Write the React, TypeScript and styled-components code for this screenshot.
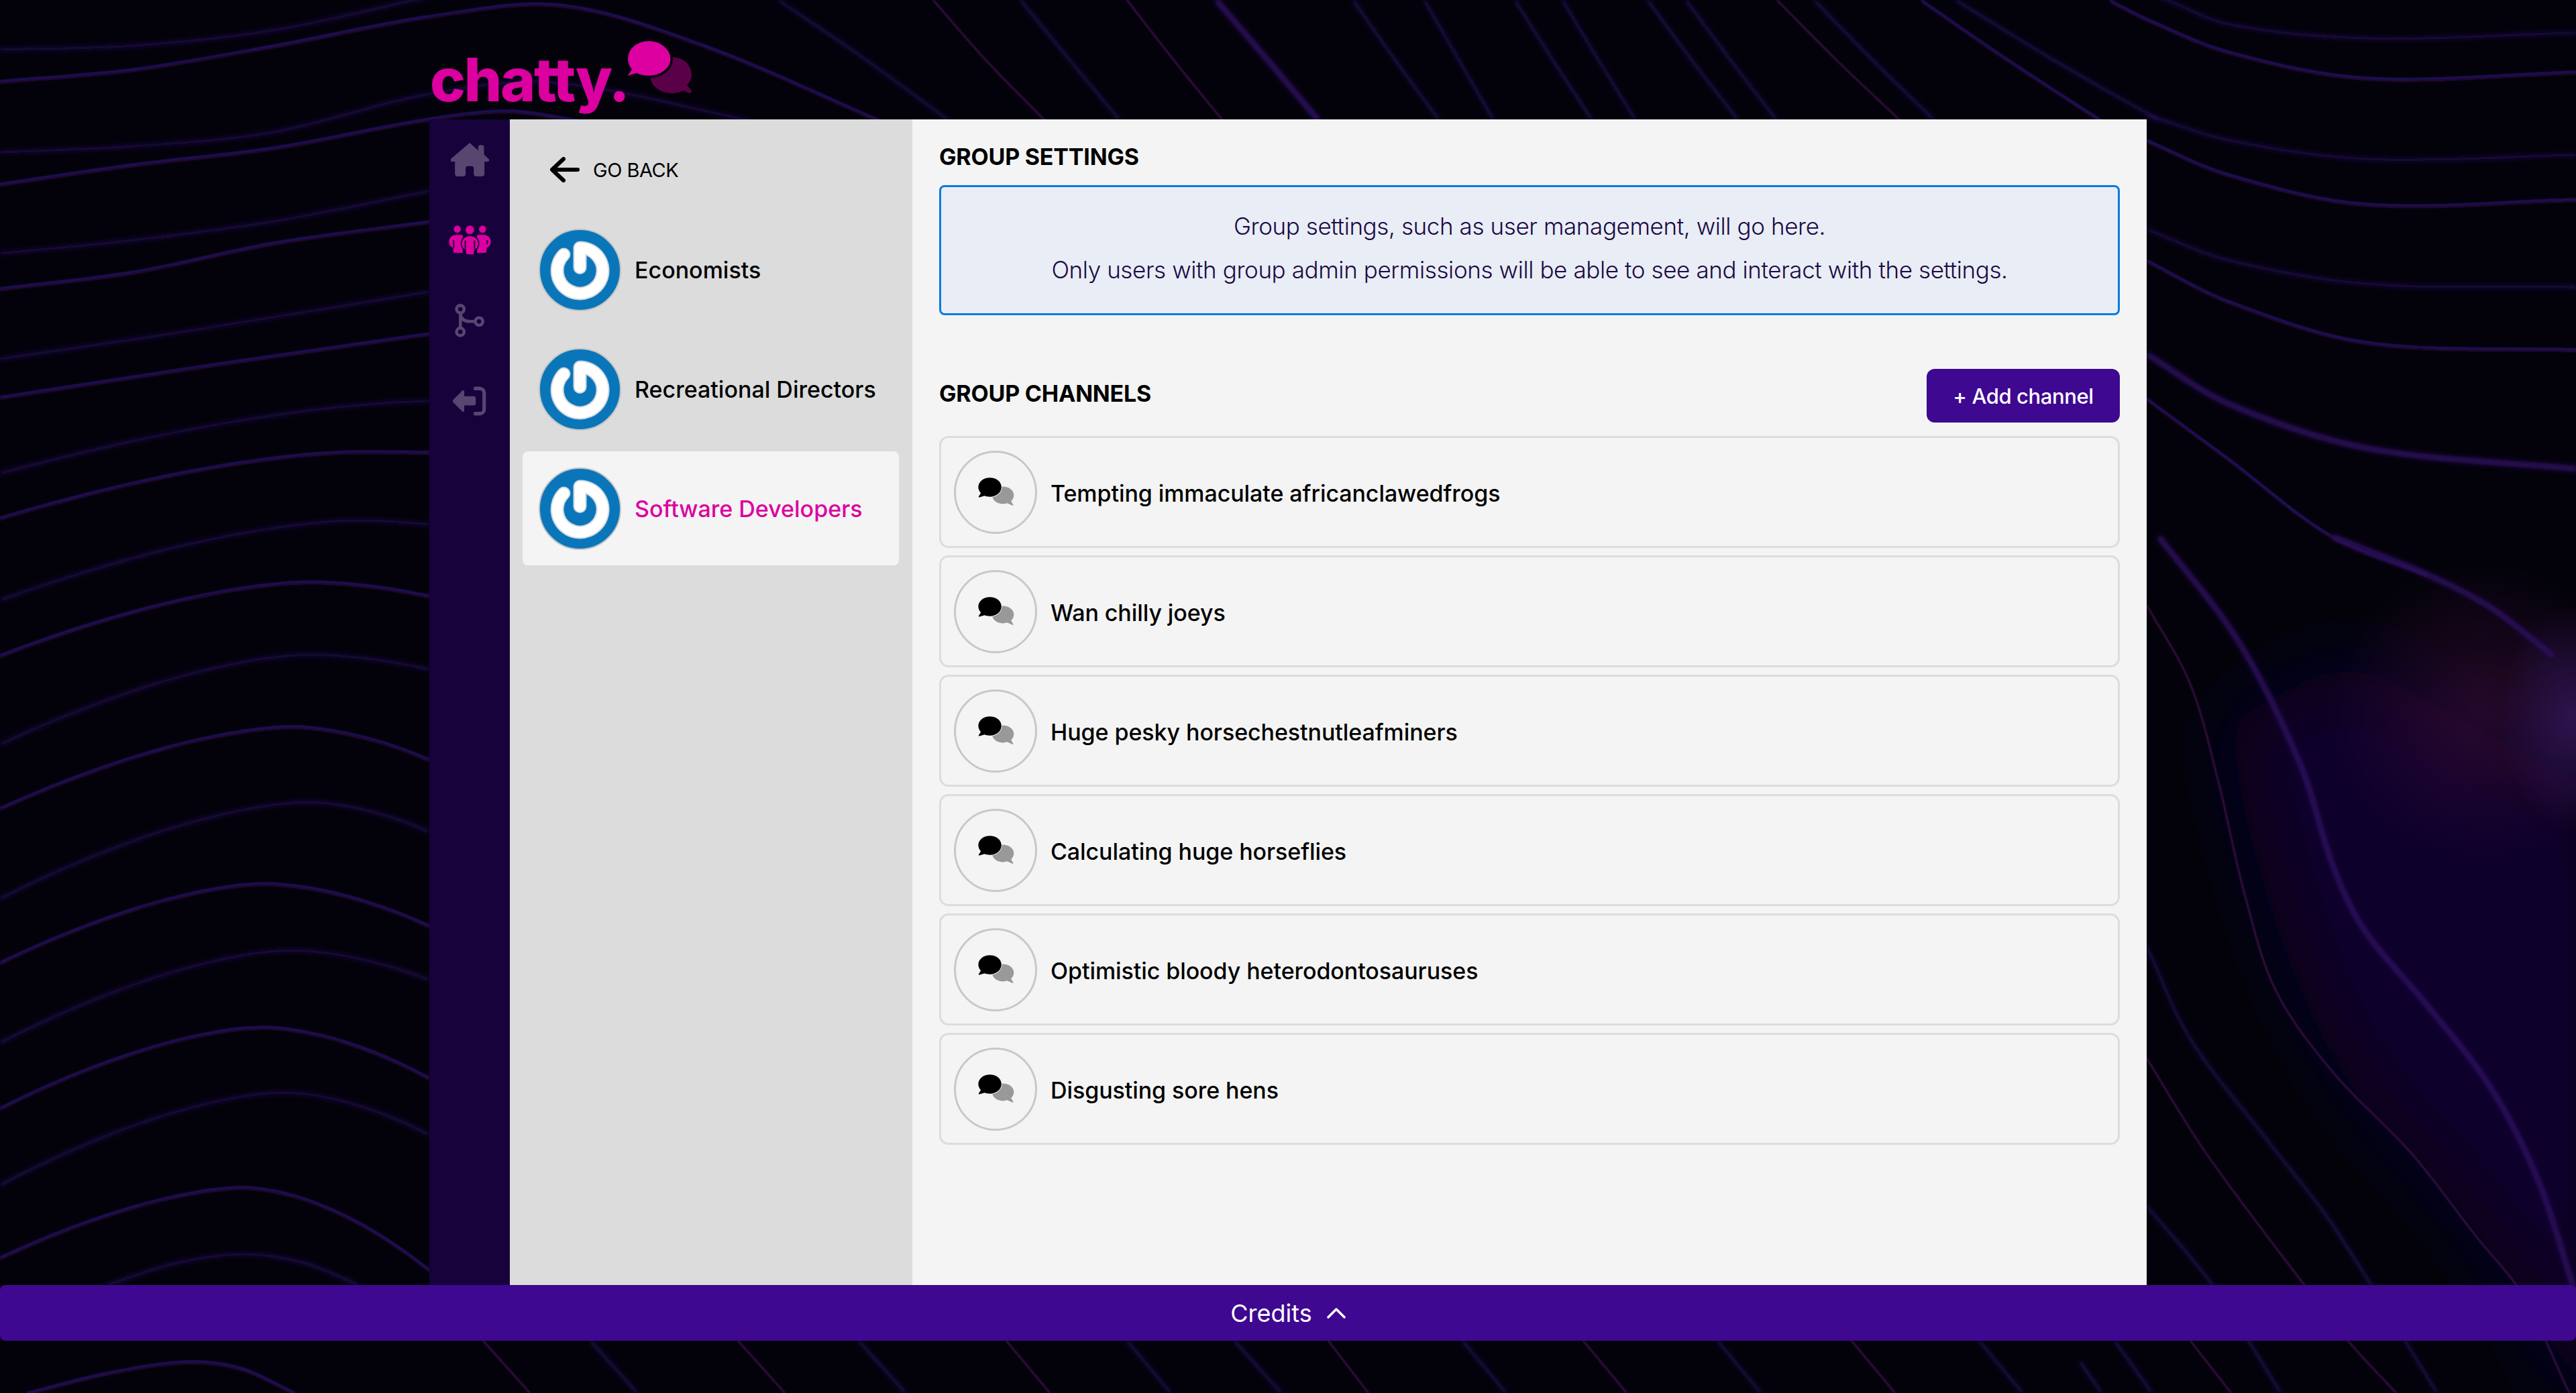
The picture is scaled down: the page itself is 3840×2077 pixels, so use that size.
import React from 'react';
import styled, { createGlobalStyle } from 'styled-components';

const GlobalStyle = createGlobalStyle`
  html, body { margin: 0; padding: 0; height: 100%; background: #03020a; }
  body { font-family: Inter, "Noto Sans", "Liberation Sans", sans-serif; color: #000; }
  #root { height: 100%; }
`;

const Page = styled.div`
  position: relative;
  height: 2077px;
  overflow: hidden;
  display: flex;
  flex-direction: column;
`;

const Backdrop = styled.svg`
  position: absolute;
  inset: 0;
  width: 3840px;
  height: 2077px;
`;

const Header = styled.header`
  position: relative;
  width: 2560px;
  height: 178px;
  margin: 0 auto;
  box-sizing: border-box;
  padding: 63px 0 0 1px;
  display: flex;
  align-items: flex-start;
`;

const LogoText = styled.span`
  font-size: 89px;
  line-height: 112px;
  font-weight: 800;
  letter-spacing: -2.3px;
  color: #dc00a0;
`;

const LogoMark = styled.svg`
  width: 100px;
  height: 80px;
  margin: -3px 0 0 -4px;
`;

const Shell = styled.div`
  position: relative;
  width: 2560px;
  height: 1738px;
  margin: 0 auto;
  display: flex;
`;

const Rail = styled.nav`
  width: 120px;
  flex: none;
  background: #17023b;
  display: flex;
  flex-direction: column;
`;

const RailItem = styled.div`
  height: 120px;
  display: flex;
  align-items: center;
  justify-content: center;
`;

const Side = styled.aside`
  width: 600px;
  flex: none;
  box-sizing: border-box;
  background: #dcdcdc;
  padding: 0 20px 0 19px;
  display: flex;
  flex-direction: column;
  gap: 8px;
`;

const BackLink = styled.div`
  height: 131px;
  box-sizing: border-box;
  padding: 19px 0 0 41px;
  display: flex;
  align-items: center;
  gap: 20px;
  font-size: 29px;
  font-weight: 400;
  letter-spacing: -0.5px;
`;

const GroupRow = styled.div<{ $active?: boolean }>`
  height: 170px;
  box-sizing: border-box;
  padding: 0 24px;
  border-radius: 8px;
  display: flex;
  align-items: center;
  gap: 20px;
  font-size: 34px;
  font-weight: 500;
  letter-spacing: 0;
  background: ${(p) => (p.$active ? '#f4f4f4' : 'transparent')};
  color: ${(p) => (p.$active ? '#dc00a0' : '#000')};
`;

const Main = styled.main`
  flex: 1;
  box-sizing: border-box;
  background: #f4f4f4;
  padding: 36px 40px 0;
`;

const Heading = styled.h2`
  margin: 0;
  font-size: 34px;
  line-height: 40px;
  font-weight: 700;
  letter-spacing: -0.2px;
`;

const ChannelsHeading = styled(Heading)`
  margin-bottom: 7px;
`;

const InfoBox = styled.div`
  margin-top: 22px;
  height: 194px;
  box-sizing: border-box;
  border: 3px solid #0a7be0;
  border-radius: 8px;
  background: #e9edf5;
  color: #1b0a45;
  font-size: 35px;
  font-weight: 300;
  letter-spacing: -0.4px;
  line-height: 65px;
  text-align: center;
  padding-top: 26px;
`;

const ChannelsBar = styled.div`
  margin-top: 80px;
  display: flex;
  align-items: center;
  justify-content: space-between;
`;

const AddButton = styled.button`
  width: 288px;
  height: 80px;
  border: 0;
  border-radius: 12px;
  background: #3f0891;
  color: #fff;
  font: 500 31px Inter, "Noto Sans", sans-serif;
  letter-spacing: -0.4px;
`;

const ChannelList = styled.div`
  margin-top: 20px;
  display: flex;
  flex-direction: column;
  gap: 11px;
`;

const ChannelRow = styled.div`
  height: 167px;
  box-sizing: border-box;
  border: 3px solid #dcdcdc;
  border-radius: 14px;
  padding: 0 19px;
  display: flex;
  align-items: center;
  gap: 20px;
  font-size: 34px;
  font-weight: 500;
  letter-spacing: -0.08px;
`;

const ChannelName = styled.span`
  padding-top: 3px;
`;

const ChannelBadge = styled.div`
  width: 124px;
  height: 124px;
  flex: none;
  box-sizing: border-box;
  border: 3px solid #c8c8c8;
  border-radius: 50%;
  display: flex;
  align-items: center;
  justify-content: center;
`;

const CreditsBar = styled.footer`
  position: relative;
  height: 83px;
  flex: none;
  border-radius: 8px;
  background: #3f0891;
  color: #fff;
  display: flex;
  align-items: center;
  justify-content: center;
  gap: 22px;
  font-size: 36px;
  font-weight: 400;
  letter-spacing: 0;
`;

type Tone = 'strong' | 'soft' | 'wine' | 'wide';
type Wave = [Tone, number[]];

// spline whose handles scale with each segment, so uneven points don't kink
const smooth = (n: number[]) => {
  const p: [number, number][] = [];
  for (let i = 0; i < n.length; i += 2) p.push([n[i], n[i + 1]]);
  const tangent = (i: number): [number, number] => {
    const a = p[Math.max(i - 1, 0)];
    const c = p[Math.min(i + 1, p.length - 1)];
    const len = Math.hypot(c[0] - a[0], c[1] - a[1]) || 1;
    return [(c[0] - a[0]) / len, (c[1] - a[1]) / len];
  };
  let d = `M${p[0][0]} ${p[0][1]}`;
  for (let i = 0; i < p.length - 1; i++) {
    const b = p[i];
    const c = p[i + 1];
    const h = Math.hypot(c[0] - b[0], c[1] - b[1]) / 3;
    const t0 = tangent(i);
    const t1 = tangent(i + 1);
    d += ` C${b[0] + t0[0] * h} ${b[1] + t0[1] * h} ${c[0] - t1[0] * h} ${c[1] - t1[1] * h} ${c[0]} ${c[1]}`;
  }
  return d;
};

// broad crest on the left side of the page: start height, crest, end height
const crest = (y0: number, xc: number, yc: number, y1: number): number[] => {
  const out: number[] = [];
  for (let x = 0; x <= 640; x += 40) {
    const y =
      x < xc
        ? yc + (y0 - yc) * Math.pow((xc - x) / xc, 1.6)
        : yc + (y1 - yc) * Math.pow((x - xc) / (640 - xc || 1), 1.8);
    out.push(x, Math.round(y * 10) / 10);
  }
  return out;
};

const waves: Wave[] = [
  // left edge
  ['soft', [0, 74, 200, 68, 408, 45, 640, -5]],
  ['strong', [0, 121, 200, 103, 408, 68, 640, 24, 834, 7, 1048, 67, 1313, 180]],
  ['soft', [0, 227, 200, 218, 408, 197, 640, 140, 823, 123, 1120, 180]],
  ['strong', [0, 274, 200, 245, 408, 220, 640, 177, 760, 165, 865, 180]],
  ['soft', [0, 378, 200, 358, 408, 330, 640, 285]],
  ['strong', [0, 430, 200, 405, 408, 362, 640, 330]],
  ['soft', [0, 535, 245, 499, 640, 435]],
  ['strong', [0, 592, 320, 543, 640, 497]],
  ['soft', crest(706, 640, 598, 598)],
  ['strong', crest(772, 530, 673, 674)],
  ['soft', crest(895, 530, 776, 782)],
  ['strong', crest(977, 460, 867, 888)],
  ['soft', crest(1110, 460, 976, 998)],
  ['strong', crest(1205, 432, 1083, 1132)],
  ['soft', crest(1340, 457, 1196, 1240)],
  ['strong', crest(1435, 392, 1317, 1380)],
  ['soft', crest(1555, 432, 1417, 1461)],
  ['strong', crest(1652, 388, 1531, 1607)],
  ['soft', crest(1767, 420, 1629, 1692)],
  ['strong', crest(1875, 360, 1770, 1893)],
  ['soft', [160, 1916, 260, 1884, 360, 1870, 450, 1882, 535, 1916]],
  ['strong', [40, 2077, 160, 2047, 280, 2030, 360, 2040, 440, 2077]],
  // top strip
  ['soft', [1160, 0, 1285, 85, 1415, 180]],
  ['wine', [1391, 0, 1470, 90, 1558, 180]],
  ['soft', [1521, 0, 1595, 90, 1670, 180]],
  ['wine', [1680, 0, 1750, 90, 1823, 180]],
  ['wide', [1813, 0, 1890, 90, 1966, 180]],
  ['soft', [2017, 0, 2080, 90, 2146, 180]],
  ['soft', [2123, 0, 2175, 90, 2227, 180]],
  ['soft', [2258, 0, 2315, 90, 2374, 180]],
  ['soft', [2329, 0, 2383, 90, 2439, 180]],
  ['soft', [2456, 0, 2522, 90, 2592, 180]],
  ['soft', [2513, 0, 2580, 90, 2649, 180]],
  ['wine', [2649, 0, 2738, 90, 2833, 180]],
  ['soft', [2704, 0, 2792, 90, 2884, 180]],
  ['strong', [2864, 0, 2995, 90, 3133, 180]],
  ['soft', [2915, 0, 3062, 90, 3220, 180]],
  // right edge
  ['soft', [3145, -30, 3230, 0, 3322, 36, 3527, 57, 3840, 49]],
  ['strong', [3145, 0, 3200, 28, 3322, 77, 3527, 116, 3840, 107]],
  ['soft', [3200, 171, 3322, 209, 3527, 237, 3840, 231]],
  ['strong', [3200, 209, 3322, 260, 3527, 304, 3840, 297]],
  ['soft', [3200, 342, 3322, 388, 3527, 423, 3840, 428]],
  ['strong', [3200, 388, 3322, 449, 3527, 510, 3840, 521]],
  ['wide', [3200, 528, 3322, 602, 3527, 668, 3840, 699]],
  ['strong', [3200, 594, 3322, 684, 3477, 800, 3619, 857]],
  ['wide', [3477, 800, 3619, 857, 3713, 906, 3807, 979]],
  ['wide', [3218, 800, 3336, 955, 3430, 1142, 3477, 1289, 3524, 1386, 3619, 1500, 3713, 1622, 3784, 1761, 3840, 1932]],
  ['wine', [3200, 902, 3265, 1020, 3307, 1166, 3345, 1329, 3392, 1476, 3477, 1598, 3595, 1720, 3690, 1842, 3760, 1930, 3830, 2077]],
  ['soft', [3200, 1411, 3265, 1549, 3383, 1704, 3477, 1826, 3633, 2077]],
  ['wine', [3200, 1578, 3289, 1720, 3435, 1916, 3500, 1999, 3572, 2077]],
  ['soft', [3200, 1798, 3298, 1916, 3400, 2077]],
  // bottom strip
  ['wine', [3265, 1999, 3326, 2077]],
  ['soft', [3152, 1999, 3208, 2077]],
  ['soft', [3100, 2030, 3133, 2077]],
  ['wine', [1980, 1999, 2040, 2077]],
  ['soft', [1840, 1999, 1910, 2077]],
  ['wine', [720, 1999, 790, 2077]],
  ['soft', [880, 1999, 950, 2077]],
  ['wine', [1100, 1999, 1170, 2077]],
  ['soft', [1280, 1999, 1350, 2077]],
  ['wine', [1500, 1999, 1565, 2077]],
  ['soft', [1680, 1999, 1745, 2077]],
  ['soft', [2180, 1999, 2245, 2077]],
  ['wine', [2360, 1999, 2425, 2077]],
  ['soft', [2560, 1999, 2625, 2077]],
  ['wine', [2760, 1999, 2825, 2077]],
  ['soft', [2950, 1999, 3015, 2077]],
];

const strokeOf: Record<Tone, { color: string; width: number; filter: string }> = {
  strong: { color: '#261266', width: 3, filter: 'url(#thin)' },
  soft: { color: '#1e0e48', width: 5, filter: 'url(#soft)' },
  wine: { color: '#34103f', width: 3, filter: 'url(#thin)' },
  wide: { color: '#291158', width: 9, filter: 'url(#soft)' },
};

const WaveField = () => (
  <Backdrop viewBox="0 0 3840 2077" aria-hidden>
    <defs>
      <filter id="thin" filterUnits="userSpaceOnUse" x="0" y="0" width="3840" height="2077">
        <feGaussianBlur stdDeviation="1" />
      </filter>
      <filter id="soft" filterUnits="userSpaceOnUse" x="0" y="0" width="3840" height="2077">
        <feGaussianBlur stdDeviation="3" />
      </filter>
      <filter id="haze" filterUnits="userSpaceOnUse" x="2800" y="400" width="1300" height="1900">
        <feGaussianBlur stdDeviation="60" />
      </filter>
      <radialGradient id="glowWine">
        <stop offset="0" stopColor="#3b0d3a" stopOpacity="0.6" />
        <stop offset="1" stopColor="#3b0d3a" stopOpacity="0" />
      </radialGradient>
      <radialGradient id="glowViolet">
        <stop offset="0" stopColor="#3a1a66" stopOpacity="0.7" />
        <stop offset="1" stopColor="#3a1a66" stopOpacity="0" />
      </radialGradient>
    </defs>
    <rect width="3840" height="2077" fill="#03020a" />
    <path
      d="M3320 1080 C3360 1300 3420 1500 3520 1640 C3650 1780 3760 1900 3830 2077 H3900 V1200 L3500 980 Z"
      fill="#0e0629"
      filter="url(#haze)"
    />
    <ellipse cx="3700" cy="1060" rx="230" ry="220" fill="url(#glowWine)" />
    <ellipse cx="3835" cy="1070" rx="110" ry="170" fill="url(#glowViolet)" />
    {waves.map(([tone, pts], i) => {
      const s = strokeOf[tone];
      return (
        <g key={i}>
          {tone === 'strong' && (
            <path d={smooth(pts)} transform="translate(0 3)" fill="none" stroke="#2e0d3c" strokeWidth="2" filter="url(#thin)" />
          )}
          <path d={smooth(pts)} fill="none" stroke={s.color} strokeWidth={s.width} filter={s.filter} />
        </g>
      );
    })}
  </Backdrop>
);

const BubblesLogo = () => (
  <LogoMark viewBox="0 0 100 80">
    <path
      d="M68 25c-18 0-32 11-32 27 0 15 14 27 32 27 6 0 12-1 17-4l10 4c3 0 4-3 2-5l-6-7c4-4 7-9 7-15 0-16-13-27-30-27z"
      fill="#5a0048"
    />
    <path
      d="M33-4C13-4-3 9-3 27c0 6 2 12 6 17l-6 9c-1 2 1 3 3 3l13-4c6 3 13 4 20 4 20 0 37-13 37-29S53-4 33-4z"
      fill="#dc00a0"
      stroke="#05030c"
      strokeWidth="4"
      transform="translate(4 3) scale(.92)"
    />
  </LogoMark>
);

const HomeIcon = () => (
  <svg width="57" height="50" viewBox="96 98 170 150" fill="#594570">
    <path d="M180 98L218 132V118a10 10 0 0 1 10-10h6a10 10 0 0 1 10 10V150L262 168a6 6 0 0 1-4 14H246V236a12 12 0 0 1-12 12H210a12 12 0 0 1-12-12V212a10 10 0 0 0-10-10H172a10 10 0 0 0-10 10V236a12 12 0 0 1-12 12H126a12 12 0 0 1-12-12V182H102a6 6 0 0 1-4-14Z" />
  </svg>
);

const GroupsIcon = () => (
  <svg width="63" height="44" viewBox="86 468 189 132">
    <g fill="#dc00a0">
      <circle cx="124" cy="485" r="16" />
      <circle cx="237" cy="485" r="16" />
      <circle cx="180" cy="488" r="19" />
      <path d="M118 511c-18 0-31 14-31 31 0 13 8 22 19 27v14a8 8 0 0 0 8 8h34v-80z" />
      <path d="M242 511c18 0 32 14 32 31 0 13-8 22-19 27v14a8 8 0 0 1-8 8h-34v-80z" />
      <path
        d="M180 514c-22 0-38 15-38 36 0 13 8 24 19 29v13a8 8 0 0 0 8 8h24a8 8 0 0 0 8-8v-13c11-5 19-16 19-29 0-21-16-36-40-36z"
        stroke="#17023b"
        strokeWidth="5"
      />
    </g>
    <g stroke="#17023b" strokeWidth="6" strokeLinecap="round">
      <path d="M108 536v32M258 536v14M160 538v32M201 538v32" />
    </g>
  </svg>
);

const BranchIcon = () => (
  <svg width="44" height="50" viewBox="112 820 134 150" fill="none" stroke="#594570" strokeWidth="14">
    <circle cx="137" cy="843" r="17" />
    <circle cx="137" cy="946" r="17" />
    <circle cx="222" cy="899" r="17" />
    <path d="M137 860V929M137 868C142 890 158 899 180 899H205" />
  </svg>
);

const ExitIcon = () => (
  <svg width="50" height="44" viewBox="104 1188 152 132">
    <path
      fill="#594570"
      d="M106 1248L144 1210a6 6 0 0 1 12 4V1232H198a10 10 0 0 1 10 10V1264a10 10 0 0 1-10 10H156V1294a6 6 0 0 1-12 4L106 1260a8 8 0 0 1 0-12Z"
    />
    <path d="M206 1197H226A20 20 0 0 1 246 1217V1291A20 20 0 0 1 226 1311H206" fill="none" stroke="#594570" strokeWidth="16" strokeLinecap="round" />
  </svg>
);

const ArrowBack = () => (
  <svg width="44" height="38" viewBox="0 0 44 38" fill="none" stroke="#000" strokeWidth="6" strokeLinecap="round" strokeLinejoin="round">
    <path d="M41 19H4M20 3L3 19L20 35" />
  </svg>
);

const Avatar = () => (
  <svg width="123" height="123" viewBox="0 0 123 123">
    <circle cx="61.5" cy="61.5" r="60.5" fill="#0a76ba" stroke="#c4c4c4" strokeWidth="2" />
    <path d="M61.5 58V28.5A34 34 0 1 1 37.5 38.5" fill="none" stroke="#cfd9e2" strokeWidth="20" strokeLinecap="round" strokeLinejoin="round" />
    <path d="M61.5 58V28.5A34 34 0 1 1 37.5 38.5" fill="none" stroke="#fff" strokeWidth="16" strokeLinecap="round" strokeLinejoin="round" />
  </svg>
);

const ChatIcon = () => (
  <svg width="55" height="45" viewBox="172 188 160 128">
    <path d="M282 229c-26 0-46 16-46 37 0 22 20 38 46 38 7 0 13-1 19-3l23 10c3 1 5-2 3-4l-9-15c8-7 12-16 12-26 0-21-21-37-48-37z" fill="#999" />
    <path
      d="M226 190c-28 0-50 18-50 41 0 10 4 19 11 26l-9 14c-2 3 0 5 3 4l22-6c7 3 15 4 23 4 28 0 50-18 50-42s-22-41-50-41z"
      fill="#000"
      stroke="#f4f4f4"
      strokeWidth="5"
      paintOrder="stroke"
    />
  </svg>
);

const Chevron = () => (
  <svg width="28" height="18" viewBox="0 0 28 18" fill="none" stroke="#fff" strokeWidth="3.5" strokeLinecap="round" strokeLinejoin="round">
    <path d="M2 15L14 3L26 15" />
  </svg>
);

const groups = ['Economists', 'Recreational Directors', 'Software Developers'];

const channels = [
  'Tempting immaculate africanclawedfrogs',
  'Wan chilly joeys',
  'Huge pesky horsechestnutleafminers',
  'Calculating huge horseflies',
  'Optimistic bloody heterodontosauruses',
  'Disgusting sore hens',
];

const App: React.FC = () => (
  <Page>
    <GlobalStyle />
    <WaveField />
    <Header>
      <LogoText>chatty.</LogoText>
      <BubblesLogo />
    </Header>
    <Shell>
      <Rail>
        <RailItem><HomeIcon /></RailItem>
        <RailItem><GroupsIcon /></RailItem>
        <RailItem><BranchIcon /></RailItem>
        <RailItem><ExitIcon /></RailItem>
      </Rail>
      <Side>
        <BackLink>
          <ArrowBack />
          GO BACK
        </BackLink>
        {groups.map((name, i) => (
          <GroupRow key={name} $active={i === 2}>
            <Avatar />
            {name}
          </GroupRow>
        ))}
      </Side>
      <Main>
        <Heading>GROUP SETTINGS</Heading>
        <InfoBox>
          Group settings, such as user management, will go here.
          <br />
          Only users with group admin permissions will be able to see and interact with the settings.
        </InfoBox>
        <ChannelsBar>
          <ChannelsHeading>GROUP CHANNELS</ChannelsHeading>
          <AddButton>+ Add channel</AddButton>
        </ChannelsBar>
        <ChannelList>
          {channels.map((name) => (
            <ChannelRow key={name}>
              <ChannelBadge>
                <ChatIcon />
              </ChannelBadge>
              <ChannelName>{name}</ChannelName>
            </ChannelRow>
          ))}
        </ChannelList>
      </Main>
    </Shell>
    <CreditsBar>
      Credits
      <Chevron />
    </CreditsBar>
  </Page>
);

export default App;
